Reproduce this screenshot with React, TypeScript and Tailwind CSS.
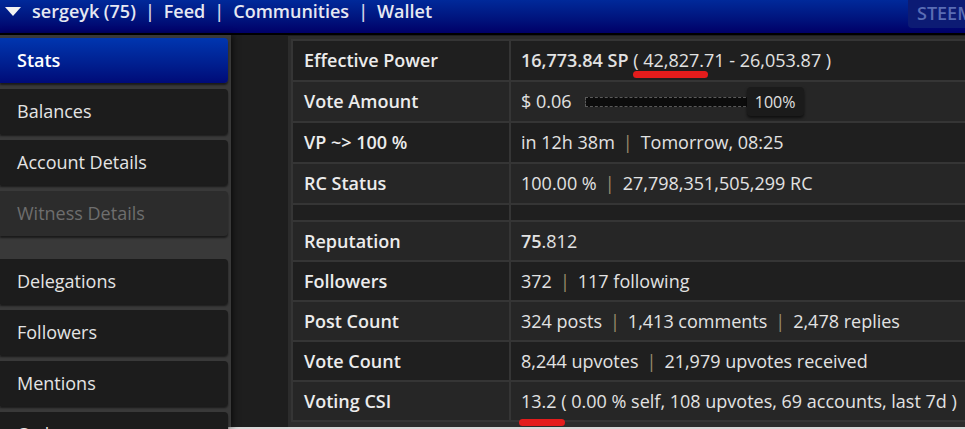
const menu = [
  { label: "Stats", active: true },
  { label: "Balances" },
  { label: "Account Details" },
  { label: "Witness Details", disabled: true },
  { spacer: true },
  { label: "Delegations" },
  { label: "Followers" },
  { label: "Mentions" },
  { label: "Orders" },
];

function Pipe({ nav }: { nav?: boolean }) {
  return (
    <span className={nav ? "mx-[9px] text-[#cfd3e6]" : "mx-[8px] text-[#9a8c6c]"}>|</span>
  );
}

function Row({
  label,
  children,
  light,
  tall,
}: {
  label: string;
  children?: React.ReactNode;
  light?: boolean;
  tall?: boolean;
}) {
  const bg = light ? "bg-[#262626]" : "bg-[#1f1f1f]";
  const h = tall ? "h-[41px]" : "h-[40px]";
  return (
    <tr className={bg}>
      <td className={h + " w-[218px] border-[2px] border-[#353535] pl-[11px] font-semibold text-[#ececec]"}>
        {label}
      </td>
      <td className={h + " border-[2px] border-[#353535] pl-[10px] text-[#e2e2e2] whitespace-nowrap"}>
        {children}
      </td>
    </tr>
  );
}

export default function App() {
  return (
    <div className="relative w-[965px] h-[429px] overflow-hidden bg-[#1e1e1e] font-['Open_Sans',sans-serif] text-[18px]">
      {/* top nav */}
      <header className="flex h-[35px] border-b-2 border-black bg-gradient-to-b from-[#00299a] to-[#000068] overflow-hidden">
        <div className="flex w-[908px] shrink-0 items-start pl-[5px] leading-[22px] font-semibold text-[#e6e8f2]">
          <svg width="16" height="9" viewBox="0 0 16 9" className="mt-[7px] mr-[11px]">
            <path d="M0 0 H16 L8 9 Z" fill="#f2f2f2" />
          </svg>
          <span>sergeyk (75)</span>
          <Pipe nav />
          <span>Feed</span>
          <Pipe nav />
          <span>Communities</span>
          <Pipe nav />
          <span>Wallet</span>
        </div>
        <div className="h-[28px] w-[80px] shrink-0 rounded-bl-[4px] bg-[#0c1b74] pl-[9px] leading-[26px] font-semibold text-[#5a6db4]">
          STEEM
        </div>
      </header>

      <div className="flex h-[392px]">
        {/* sidebar */}
        <aside className="flex w-[231px] shrink-0 flex-col gap-[6px] bg-[#393939] pt-[3px] pr-[3px] shadow-[2px_0_6px_rgba(0,0,0,0.6)]">
          {menu.map((m, i) =>
            m.spacer ? (
              <div key={i} className="h-[11px] shrink-0" />
            ) : (
              <div
                key={i}
                className={
                  "flex h-[45px] shrink-0 items-center rounded-r-[4px] pl-[17px] shadow-[0_2px_2px_rgba(0,0,0,0.55)] " +
                  (m.active
                    ? "bg-gradient-to-b from-[#0036b0] to-[#000a78] font-semibold text-white"
                    : m.disabled
                      ? "bg-[#2c2c2c] text-[#6e6e6e]"
                      : "bg-[#1c1c1c] text-[#e4e4e4]")
                }
              >
                {m.label}
              </div>
            ),
          )}
        </aside>

        <div className="w-[57px] shrink-0" />

        {/* stats table */}
        <main className="mt-[1px] min-w-0 flex-1 self-start bg-[#2c2c2c] pt-[3px] pl-[3px] pb-[5px]">
          <table className="w-[760px] border-collapse">
            <tbody>
              <Row label="Effective Power" tall>
                <span className="font-semibold">16,773.84 SP</span> ( 42,827.71 - 26,053.87 )
              </Row>
              <Row label="Vote Amount" light tall>
                <div className="flex items-center">
                  <span>$ 0.06</span>
                  <div className="ml-[13px] h-[10px] w-[166px] border border-dashed border-[#5a5a5a] bg-[#0c0c0c]" />
                  <div className="-ml-[4px] flex h-[29px] w-[57px] items-center justify-center rounded-[4px] bg-[#1b1b1b] text-[16px] text-[#e0e0e0] shadow-[0_2px_3px_rgba(0,0,0,0.6)]">
                    100%
                  </div>
                </div>
              </Row>
              <Row label="VP ~> 100 %" tall>
                in 12h 38m
                <Pipe />
                Tomorrow, 08:25
              </Row>
              <Row label="RC Status" light tall>
                100.00 %
                <Pipe />
                27,798,351,505,299 RC
              </Row>
              <tr className="bg-[#1f1f1f]">
                <td className="h-[17px] border-[2px] border-[#353535]" />
                <td className="h-[17px] border-[2px] border-[#353535]" />
              </tr>
              <Row label="Reputation" light>
                <span className="font-semibold">75</span>.812
              </Row>
              <Row label="Followers">
                372
                <Pipe />
                117 following
              </Row>
              <Row label="Post Count" light>
                324 posts
                <Pipe />
                1,413 comments
                <Pipe />
                2,478 replies
              </Row>
              <Row label="Vote Count">
                8,244 upvotes
                <Pipe />
                21,979 upvotes received
              </Row>
              <Row label="Voting CSI" light>
                13.2 ( 0.00 % self, 108 upvotes, 69 accounts, last 7d )
              </Row>
            </tbody>
          </table>
        </main>
      </div>

      <div className="h-[2px] bg-[#d8d8d8]" />

      {/* red annotation marks */}
      <div className="absolute left-[633px] top-[71px] h-[7px] w-[75px] rounded-full bg-[#e41c1c]" />
      <div className="absolute left-[519px] top-[419px] h-[7px] w-[46px] rounded-full bg-[#e41c1c]" />
    </div>
  );
}
